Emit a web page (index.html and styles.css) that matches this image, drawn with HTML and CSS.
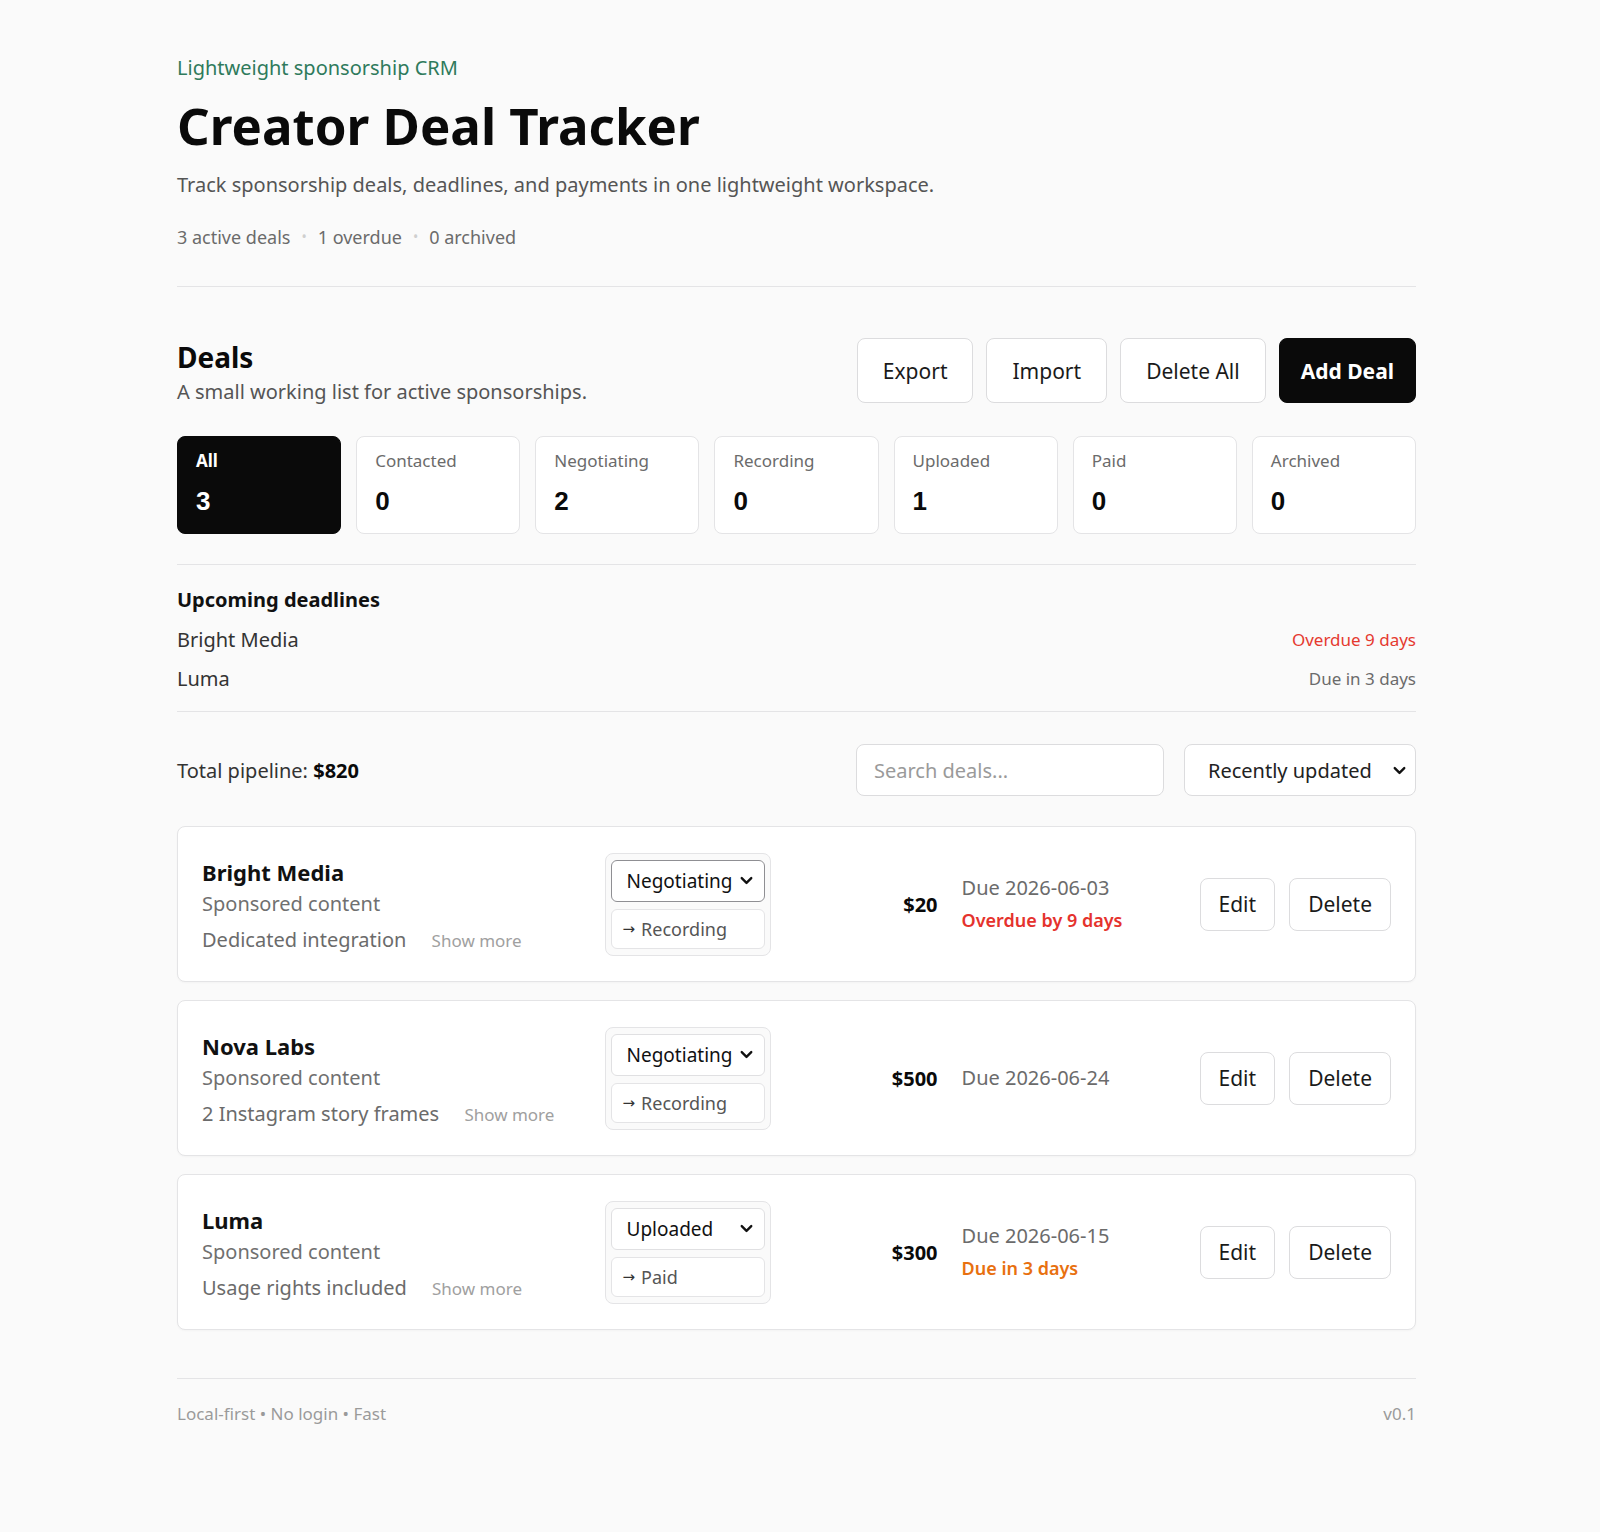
FILE: index.html
```html
<!DOCTYPE html>
<html lang="en">
<head>
<meta charset="utf-8">
<title>Creator Deal Tracker</title>
<link rel="stylesheet" href="styles.css">
</head>
<body>
<main class="page">
  <header class="hero">
    <p class="eyebrow">Lightweight sponsorship CRM</p>
    <h1 class="title">Creator Deal Tracker</h1>
    <p class="lead">Track sponsorship deals, deadlines, and payments in one lightweight workspace.</p>
    <p class="meta"><span>3 active deals</span><span class="dot">•</span><span>1 overdue</span><span class="dot">•</span><span>0 archived</span></p>
  </header>

  <section class="deals">
    <div class="deals-head">
      <div class="deals-title">
        <h2>Deals</h2>
        <p>A small working list for active sponsorships.</p>
      </div>
      <div class="actions">
        <button class="btn">Export</button>
        <button class="btn">Import</button>
        <button class="btn">Delete All</button>
        <button class="btn btn-primary">Add Deal</button>
      </div>
    </div>

    <div class="filters">
      <div class="filter active"><span class="f-label">All</span><span class="f-count">3</span></div>
      <div class="filter"><span class="f-label">Contacted</span><span class="f-count">0</span></div>
      <div class="filter"><span class="f-label">Negotiating</span><span class="f-count">2</span></div>
      <div class="filter"><span class="f-label">Recording</span><span class="f-count">0</span></div>
      <div class="filter"><span class="f-label">Uploaded</span><span class="f-count">1</span></div>
      <div class="filter"><span class="f-label">Paid</span><span class="f-count">0</span></div>
      <div class="filter"><span class="f-label">Archived</span><span class="f-count">0</span></div>
    </div>

    <div class="deadlines">
      <h3>Upcoming deadlines</h3>
      <div class="dl-row"><span class="dl-name">Bright Media</span><span class="dl-when overdue">Overdue 9 days</span></div>
      <div class="dl-row"><span class="dl-name">Luma</span><span class="dl-when">Due in 3 days</span></div>
    </div>

    <div class="toolbar">
      <p class="pipeline">Total pipeline: <strong>$820</strong></p>
      <div class="tools">
        <input class="search" type="text" placeholder="Search deals...">
        <div class="sort"><span>Recently updated</span><svg class="chev" viewBox="0 0 24 24"><polyline points="6 9 12 15 18 9"/></svg></div>
      </div>
    </div>

    <div class="deal-list">
      <article class="deal">
        <div class="info">
          <h4>Bright Media</h4>
          <p class="type">Sponsored content</p>
          <p class="desc">Dedicated integration <span class="more">Show more</span></p>
        </div>
        <div class="status">
          <div class="select focused"><span>Negotiating</span><svg class="chev" viewBox="0 0 24 24"><polyline points="6 9 12 15 18 9"/></svg></div>
          <button class="next"><span class="arrow">→</span>Recording</button>
        </div>
        <div class="amount">$20</div>
        <div class="due"><span class="date">Due 2026-06-03</span><span class="flag overdue">Overdue by 9 days</span></div>
        <div class="row-actions"><button class="btn btn-sm">Edit</button><button class="btn btn-sm">Delete</button></div>
      </article>

      <article class="deal">
        <div class="info">
          <h4>Nova Labs</h4>
          <p class="type">Sponsored content</p>
          <p class="desc">2 Instagram story frames <span class="more">Show more</span></p>
        </div>
        <div class="status">
          <div class="select"><span>Negotiating</span><svg class="chev" viewBox="0 0 24 24"><polyline points="6 9 12 15 18 9"/></svg></div>
          <button class="next"><span class="arrow">→</span>Recording</button>
        </div>
        <div class="amount">$500</div>
        <div class="due"><span class="date">Due 2026-06-24</span></div>
        <div class="row-actions"><button class="btn btn-sm">Edit</button><button class="btn btn-sm">Delete</button></div>
      </article>

      <article class="deal">
        <div class="info">
          <h4>Luma</h4>
          <p class="type">Sponsored content</p>
          <p class="desc">Usage rights included <span class="more">Show more</span></p>
        </div>
        <div class="status">
          <div class="select"><span>Uploaded</span><svg class="chev" viewBox="0 0 24 24"><polyline points="6 9 12 15 18 9"/></svg></div>
          <button class="next"><span class="arrow">→</span>Paid</button>
        </div>
        <div class="amount">$300</div>
        <div class="due"><span class="date">Due 2026-06-15</span><span class="flag soon">Due in 3 days</span></div>
        <div class="row-actions"><button class="btn btn-sm">Edit</button><button class="btn btn-sm">Delete</button></div>
      </article>
    </div>
  </section>

  <footer class="footer">
    <span>Local-first • No login • Fast</span>
    <span>v0.1</span>
  </footer>
</main>
</body>
</html>
```

FILE: styles.css
```css
* { box-sizing: border-box; }

html, body {
  margin: 0;
  padding: 0;
  background: #fafafa;
}

body {
  font-family: "Noto Sans", "Open Sans", sans-serif;
  color: #111;
}

p, h1, h2, h3, h4 { margin: 0; }

button, input {
  font-family: inherit;
}

.page {
  width: 1239px;
  margin: 0 auto 0 177px;
  padding: 54px 0 100px;
}

/* hero */
.hero {
  border-bottom: 1px solid #e4e4e6;
  padding-bottom: 36px;
}

.eyebrow {
  font-size: 20px;
  line-height: 28px;
  color: #2f7a5c;
}

.title {
  margin-top: 10px;
  font-size: 51px;
  line-height: 67px;
  font-weight: 700;
  color: #0a0a0a;
}

.lead {
  margin-top: 12px;
  font-size: 20px;
  line-height: 28px;
  color: #555;
}

.meta {
  margin-top: 25px;
  font-size: 18px;
  line-height: 26px;
  color: #6b6b6b;
  display: flex;
  align-items: center;
  gap: 11px;
}

.meta .dot {
  color: #cfcfcf;
  font-size: 14px;
}

/* deals head */
.deals-head {
  margin-top: 51px;
  display: flex;
  justify-content: space-between;
  align-items: flex-start;
}

.deals-title h2 {
  font-size: 28px;
  line-height: 36px;
  font-weight: 700;
  color: #0a0a0a;
  margin-top: 1px;
}

.deals-title p {
  margin-top: 3px;
  font-size: 20px;
  line-height: 28px;
  color: #555;
}

.actions {
  display: flex;
  gap: 13px;
}

.btn {
  height: 65px;
  padding: 0 25px;
  font-size: 21px;
  color: #1a1a1a;
  background: #fff;
  border: 1px solid #dcdcde;
  border-radius: 8px;
  cursor: pointer;
}

.btn-primary {
  background: #0a0a0a;
  border-color: #0a0a0a;
  color: #fff;
  font-weight: 700;
  padding: 0 21px;
}

/* filters */
.filters {
  margin-top: 30px;
  display: grid;
  grid-template-columns: repeat(7, 1fr);
  gap: 15px;
  padding-bottom: 30px;
  border-bottom: 1px solid #e4e4e6;
}

.filter {
  height: 98px;
  background: #fff;
  border: 1px solid #e4e4e6;
  border-radius: 8px;
  padding: 12px 18px 0;
  display: flex;
  flex-direction: column;
}

.f-label {
  font-size: 17px;
  line-height: 24px;
  color: #6b6b6b;
}

.f-count {
  margin-top: 12px;
  font-family: "Liberation Sans", Arial, sans-serif;
  font-size: 26px;
  line-height: 32px;
  font-weight: 700;
  color: #0a0a0a;
}

.filter.active {
  background: #0a0a0a;
  border-color: #0a0a0a;
}

.filter.active .f-label,
.filter.active .f-count {
  color: #fff;
  font-weight: 700;
}

/* deadlines */
.deadlines {
  padding: 21px 0 18px;
  border-bottom: 1px solid #e4e4e6;
  display: flex;
  flex-direction: column;
  gap: 11px;
}

.deadlines h3 {
  font-size: 20px;
  line-height: 28px;
  font-weight: 700;
  color: #111;
  margin-bottom: 1px;
}

.dl-row {
  display: flex;
  justify-content: space-between;
  align-items: center;
  line-height: 28px;
}

.dl-name {
  font-size: 20px;
  color: #333;
}

.dl-when {
  font-size: 17px;
  color: #6b6b6b;
}

.dl-when.overdue { color: #e5392f; }

/* toolbar */
.toolbar {
  margin-top: 32px;
  display: flex;
  justify-content: space-between;
  align-items: center;
}

.pipeline {
  font-size: 20px;
  color: #333;
}

.pipeline strong {
  color: #0a0a0a;
}

.tools {
  display: flex;
  gap: 20px;
}

.search {
  width: 308px;
  height: 52px;
  padding: 0 17px;
  font-size: 20px;
  color: #111;
  background: #fff;
  border: 1px solid #dcdcde;
  border-radius: 8px;
  outline: none;
}

.search::placeholder { color: #9a9a9a; }

.sort {
  width: 232px;
  height: 52px;
  padding: 0 6px 0 23px;
  display: flex;
  align-items: center;
  justify-content: space-between;
  font-size: 20px;
  color: #222;
  background: #fff;
  border: 1px solid #dcdcde;
  border-radius: 8px;
}

.chev {
  width: 19px;
  height: 19px;
  fill: none;
  stroke: #111;
  stroke-width: 3;
  stroke-linecap: round;
  stroke-linejoin: round;
}

/* deal cards */
.deal-list {
  margin-top: 30px;
  display: flex;
  flex-direction: column;
  gap: 18px;
}

.deal {
  background: #fff;
  border: 1px solid #e4e4e6;
  border-radius: 8px;
  box-shadow: 0 1px 2px rgba(0, 0, 0, 0.03);
  padding: 25px 24px;
  display: grid;
  grid-template-columns: minmax(0, 1fr) 166px 143px 214px auto;
  column-gap: 24px;
  align-items: center;
}

.info {
  margin-top: 5px;
}

.info h4 {
  font-size: 22px;
  line-height: 30px;
  font-weight: 700;
  color: #111;
}

.info .type {
  margin-top: 1px;
  font-size: 20px;
  line-height: 32px;
  color: #707070;
}

.info .desc {
  margin-top: 5px;
  font-size: 20px;
  line-height: 30px;
  color: #6b6b6b;
}

.info .more {
  margin-left: 20px;
  font-size: 17px;
  color: #a0a0a0;
}

.status {
  border: 1px solid #e4e4e6;
  border-radius: 8px;
  background: #fafafa;
  padding: 6px 5px;
  display: flex;
  flex-direction: column;
  gap: 7px;
}

.select {
  height: 42px;
  padding: 0 8px 0 15px;
  display: flex;
  align-items: center;
  justify-content: space-between;
  font-size: 19px;
  color: #111;
  background: #fff;
  border: 1px solid #e0e0e2;
  border-radius: 6px;
}

.select.focused {
  border-color: #8f8f93;
}

.next {
  height: 40px;
  padding: 0 11px;
  display: flex;
  align-items: center;
  gap: 6px;
  text-align: left;
  font-size: 18px;
  color: #555;
  background: #fff;
  border: 1px solid #e4e4e6;
  border-radius: 6px;
}

.next .arrow {
  font-family: "DejaVu Sans", sans-serif;
  font-size: 15px;
  color: #333;
}

.amount {
  text-align: right;
  font-size: 20px;
  font-weight: 700;
  color: #0a0a0a;
}

.due {
  display: flex;
  flex-direction: column;
  line-height: 32px;
}

.due .date {
  font-size: 20px;
  color: #6b6b6b;
}

.due .flag {
  font-size: 18px;
  font-weight: 600;
}

.flag.overdue { color: #e5322d; }
.flag.soon { color: #e8700f; }

.row-actions {
  display: flex;
  gap: 14px;
}

.btn-sm {
  height: 53px;
  padding: 0 18px;
  font-size: 21px;
}

/* footer */
.footer {
  margin-top: 48px;
  padding-top: 23px;
  border-top: 1px solid #e4e4e6;
  display: flex;
  justify-content: space-between;
  font-size: 17px;
  line-height: 24px;
  color: #9a9a9a;
}
```
